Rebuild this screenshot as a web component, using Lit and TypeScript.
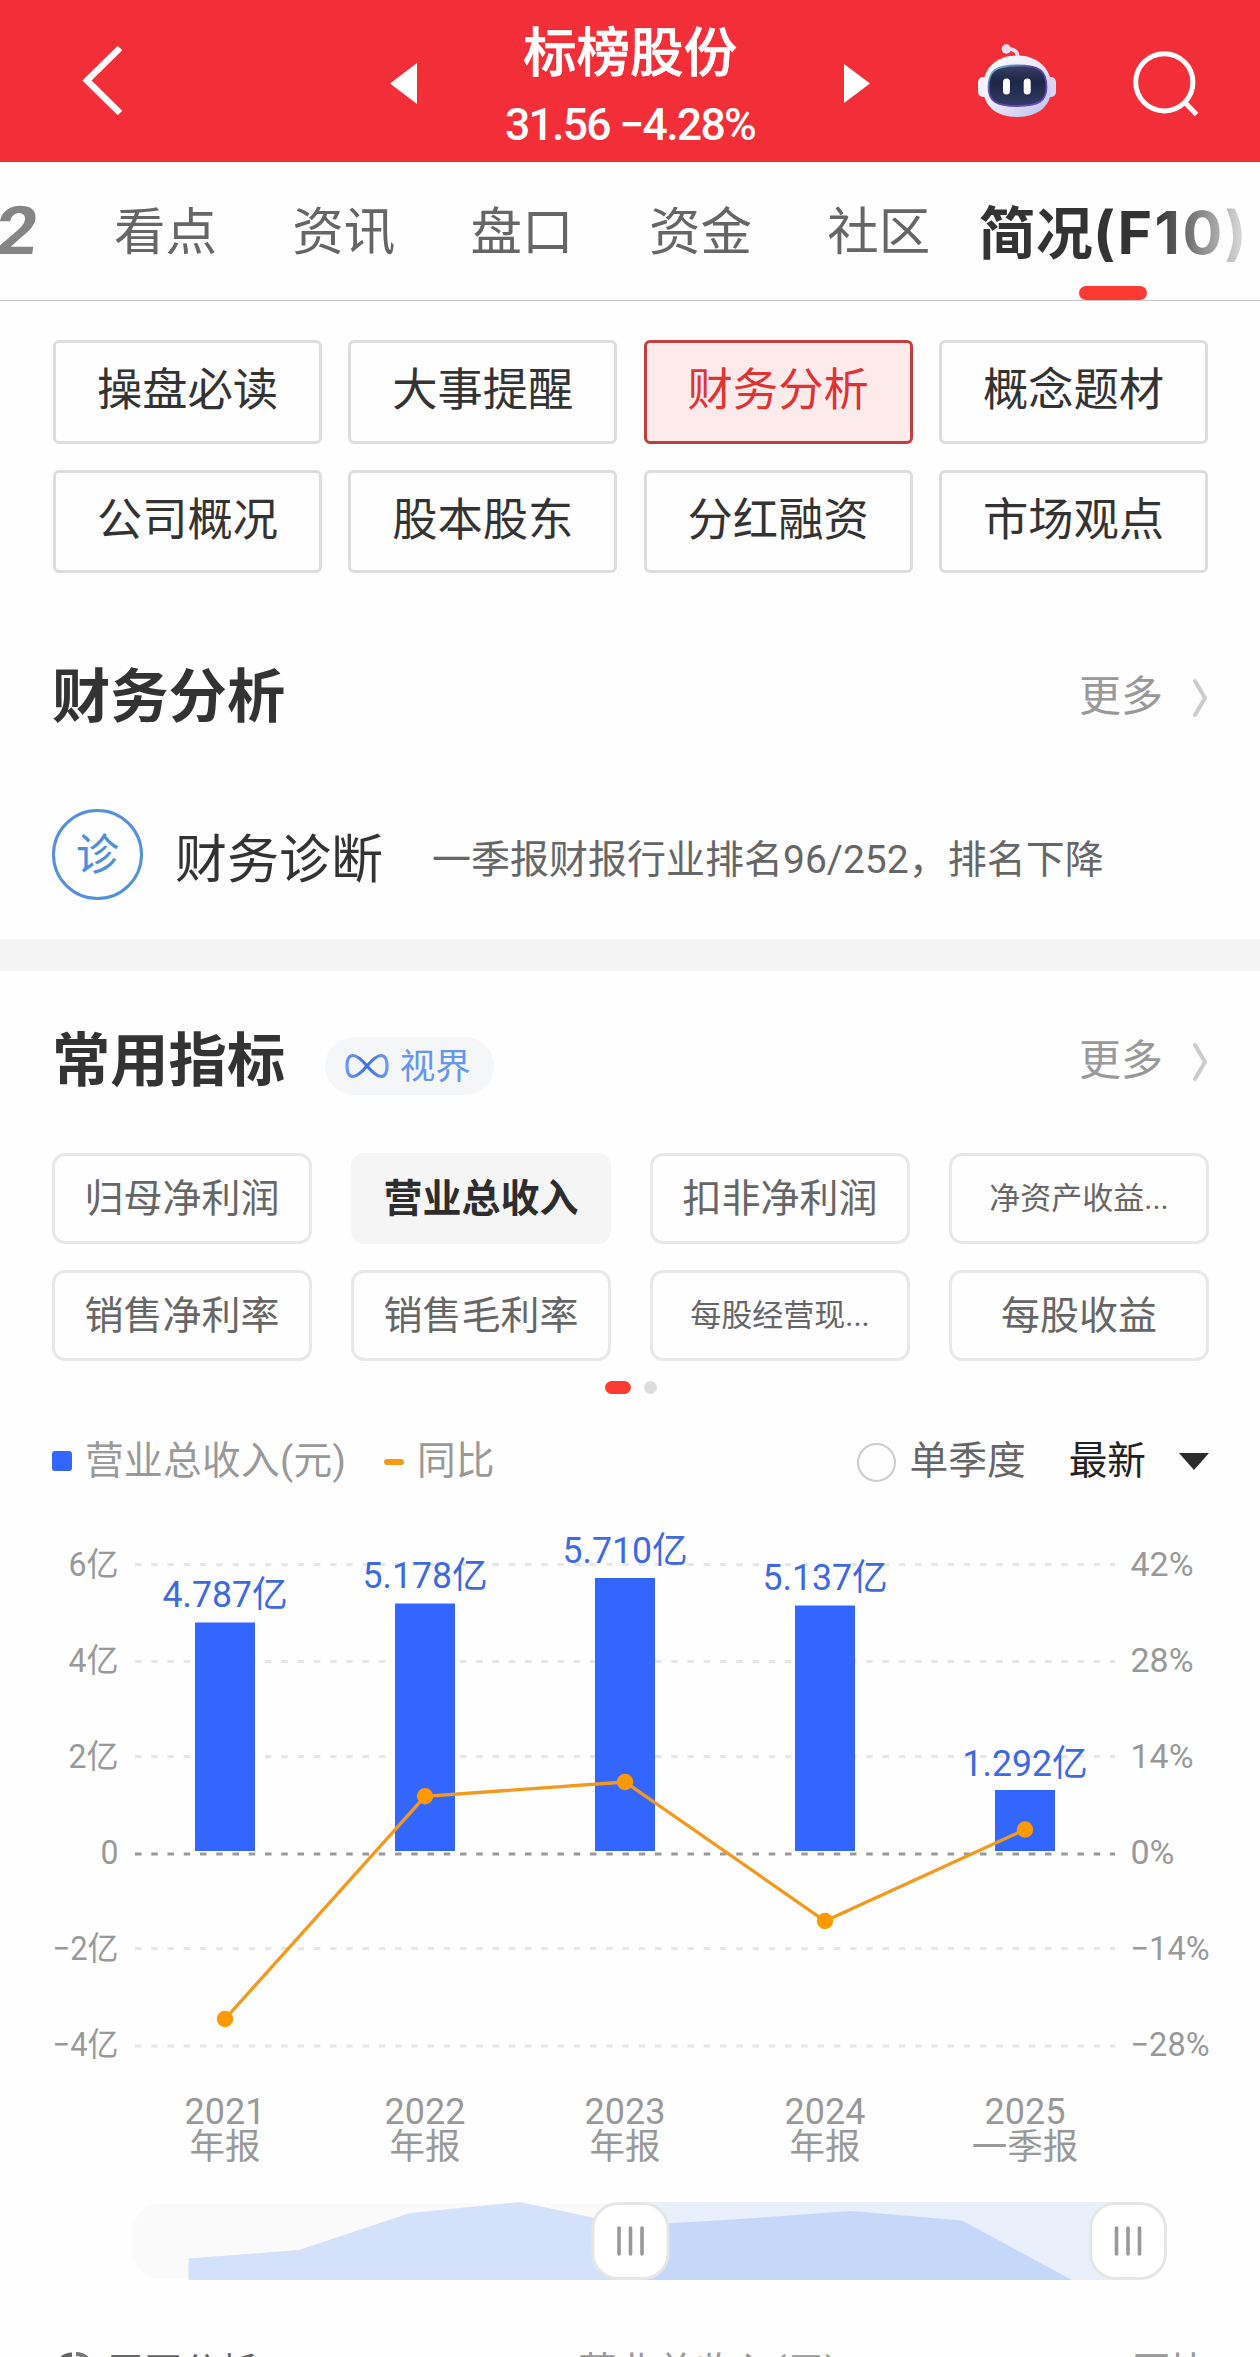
import { LitElement, html, svg, css } from "lit";
import { customElement } from "lit/decorators.js";
import { classMap } from "lit/directives/class-map.js";

const TABS = ["看点", "资讯", "盘口", "资金", "社区"];
const SECTIONS = ["操盘必读", "大事提醒", "财务分析", "概念题材", "公司概况", "股本股东", "分红融资", "市场观点"];
const METRICS = ["归母净利润", "营业总收入", "扣非净利润", "净资产收益...", "销售净利率", "销售毛利率", "每股经营现...", "每股收益"];

const AXIS = [
  { y: 1564.5, left: "6亿", right: "42%", lw: 50, rw: 63 },
  { y: 1661.5, left: "4亿", right: "28%", lw: 50, rw: 63 },
  { y: 1756.5, left: "2亿", right: "14%", lw: 50, rw: 63 },
  { y: 1854, left: "0", right: "0%", lw: 18, rw: 44 },
  { y: 1948.5, left: "−2亿", right: "−14%", lw: 66, rw: 79 },
  { y: 2046, left: "−4亿", right: "−28%", lw: 66, rw: 79 },
];
const LABEL_BASE = [1575.5, 1671.5, 1767.5, 1863.5, 1959.5, 2055.5];

const BARS = [
  { x: 225, top: 1622.5, value: "4.787亿", base: 1607, dot: 2019, year: "2021", term: "年报" },
  { x: 425, top: 1603.5, value: "5.178亿", base: 1588, dot: 1796.3, year: "2022", term: "年报" },
  { x: 625, top: 1578, value: "5.710亿", base: 1563, dot: 1782, year: "2023", term: "年报" },
  { x: 825, top: 1605.5, value: "5.137亿", base: 1590, dot: 1921, year: "2024", term: "年报" },
  { x: 1025, top: 1790, value: "1.292亿", base: 1775.5, dot: 1829.5, year: "2025", term: "一季报" },
];

@customElement("stock-header")
class StockHeader extends LitElement {
  static styles = css`
    :host { display: flex; height: 162px; background: #f22f38; color: #fff; }
    svg { display: block; flex: none; }
    .back { margin: 43px 0 0 80px; }
    .prev { margin: 63px 0 0 264px; }
    .title { margin-left: 63px; width: 300px; text-align: center; flex: none; }
    .name { font-size: 53.5px; line-height: 60px; font-weight: 500; margin-top: 24px; -webkit-text-stroke: .6px #fff; }
    .quote { font-size: 44.5px; line-height: 52px; font-weight: 500; margin-top: 15px; letter-spacing: -1.7px; white-space: nowrap; }
    .next { margin: 63px 0 0 64px; }
    .bot { margin: 42px 0 0 105px; }
    .search { margin: 48px 0 0 72px; }
  `;
  render() {
    return html`
      <svg class="back" width="46" height="76" viewBox="80 44 46 76">
        <path d="M120 49 L87 81.500 L120 114" fill="none" stroke="#fff" stroke-width="6.500" />
      </svg>
      <svg class="prev" width="27" height="41" viewBox="0 0 27 41"><path d="M27 0V41L0 20.500Z" fill="#fff" /></svg>
      <div class="title">
        <div class="name">标榜股份</div>
        <div class="quote">31.56 −4.28%</div>
      </div>
      <svg class="next" width="27" height="41" viewBox="0 0 27 41"><path d="M0 1V40L26 20.500Z" fill="#fff" /></svg>
      <svg class="bot" width="82" height="78" viewBox="976 42 82 78">
        <defs>
          <linearGradient id="shell" x1="0" y1="0" x2="1" y2="1">
            <stop offset="0" stop-color="#ffffff" /><stop offset=".45" stop-color="#eeeaf8" /><stop offset="1" stop-color="#b9bdf0" />
          </linearGradient>
          <linearGradient id="rim" x1="0" y1="0" x2="1" y2="1">
            <stop offset="0" stop-color="#67d6ea" /><stop offset=".4" stop-color="#5b3f9d" /><stop offset="1" stop-color="#6d45d8" />
          </linearGradient>
          <linearGradient id="glass" x1="0" y1="0" x2="0" y2="1">
            <stop offset="0" stop-color="#3a4064" /><stop offset=".4" stop-color="#1d2646" /><stop offset="1" stop-color="#323c63" />
          </linearGradient>
        </defs>
        <path d="M1007 49 Q1017 48 1018 57" fill="none" stroke="#eadff2" stroke-width="3.500" />
        <circle cx="1006.300" cy="49" r="4.700" fill="#e6dff4" />
        <rect x="978" y="77" width="12" height="20" rx="5" fill="#f4f0fb" />
        <rect x="1044" y="77" width="12" height="20" rx="5" fill="#d9d6f5" />
        <path d="M1017 55.500 C1038 55.500 1051.500 69 1051.500 87 C1051.500 106 1038 117 1017 117 C996 117 983 106 983 87 C983 69 996 55.500 1017 55.500Z" fill="url(#shell)" />
        <path d="M1017 65.500 C1040 65.500 1046.500 71 1046.500 87 C1046.500 101 1039 106 1017 106 C996 106 988.500 101 988.500 87 C988.500 71 995 65.500 1017 65.500Z" fill="url(#glass)" stroke="url(#rim)" stroke-width="1.800" />
        <rect x="1003" y="78.500" width="7" height="16" rx="3.500" fill="#fff" />
        <rect x="1023.700" y="78.500" width="7" height="16" rx="3.500" fill="#fff" />
      </svg>
      <svg class="search" width="70" height="72" viewBox="1130 48 70 72">
        <circle cx="1164.300" cy="82.300" r="28.600" fill="none" stroke="#fff" stroke-width="5" />
        <path d="M1184.500 102 L1196.500 114.500" stroke="#fff" stroke-width="5" />
      </svg>
    `;
  }
}

@customElement("tab-strip")
class TabStrip extends LitElement {
  static styles = css`
    :host { display: flex; position: relative; height: 138px; border-bottom: 1px solid #c6c6c6; overflow: hidden; color: #666; }
    .level { width: 114px; flex: none; font: 700 67px/138px Roboto, sans-serif; color: #858585; }
    .glyph { display: inline-block; transform: skewX(-8deg) scaleX(1.1); transform-origin: 0 50%; margin-left: -4px; }
    .tab { width: 178.300px; flex: none; font-size: 51.500px; line-height: 142px; }
    .current {
      margin-left: -27px; font-size: 57px; line-height: 141px; font-weight: 700; letter-spacing: .2px; white-space: nowrap;
      background: linear-gradient(90deg, #333 178px, #e8e8e8 272px); -webkit-background-clip: text; background-clip: text; color: transparent;
    }
    .code { font-family: Inter, Roboto, sans-serif; letter-spacing: 2.4px; font-size: 59px; }
    .mark { position: absolute; left: 1079px; bottom: 0; width: 68px; height: 14px; border-radius: 7px; background: #fb3b33; }
  `;
  render() {
    return html`
      <div class="level"><span class="glyph">2</span></div>
      ${TABS.map((t) => html`<div class="tab">${t}</div>`)}
      <div class="current">简况<span class="code">(F10)</span></div>
      <div class="mark"></div>
    `;
  }
}

@customElement("section-title")
class SectionTitle extends LitElement {
  static properties = { label: { type: String } };
  declare label: string;
  static styles = css`
    :host { display: flex; align-items: center; height: 80px; padding: 0 51px 0 52px; }
    .label { font-size: 58.300px; line-height: 80px; font-weight: 600; color: #333; }
    .more { margin-left: auto; font-size: 42px; line-height: 78px; color: #999; }
    svg { display: block; margin: 1px 0 0 28px; }
  `;
  render() {
    return html`
      <div class="label">${this.label}</div>
      <slot></slot>
      <div class="more">更多</div>
      <svg width="18" height="42" viewBox="0 0 18 42"><path d="M4 4 L14 21 L4 38" fill="none" stroke="#ccc" stroke-width="4" stroke-linecap="round" stroke-linejoin="round" /></svg>
    `;
  }
}

@customElement("revenue-chart")
class RevenueChart extends LitElement {
  static styles = css`
    :host { display: block; }
    svg { display: block; }
    text { font-family: Roboto, "Noto Sans CJK SC", sans-serif; }
    .axis { font-size: 32.500px; fill: #999; }
    .value { font-size: 36.500px; fill: #3d69e1; }
    .period { font-size: 35.500px; fill: #999; }
    .year { font-size: 36px; }
  `;
  render() {
    const line = BARS.map((b) => `${b.x},${b.dot}`).join(" ");
    return html`
      <svg width="1260" height="690" viewBox="0 1500 1260 690">
        ${AXIS.map((a, i) => svg`
          <line x1="135" x2="1115" y1=${a.y} y2=${a.y} stroke=${i === 3 ? "#999" : "#e6e6e6"} stroke-width="3" stroke-dasharray="6.500 9.750" />
          <text class="axis" x="118.500" y=${LABEL_BASE[i]} text-anchor="end" textLength=${a.lw} lengthAdjust="spacingAndGlyphs">${a.left}</text>
          <text class="axis" x="1130.500" y=${LABEL_BASE[i]} textLength=${a.rw} lengthAdjust="spacingAndGlyphs">${a.right}</text>`)}
        ${BARS.map((b) => svg`
          <rect x=${b.x - 30} y=${b.top} width="60" height=${1851 - b.top} fill="#3366ff" />
          <text class="value" x=${b.x} y=${b.base} text-anchor="middle" textLength="125" lengthAdjust="spacingAndGlyphs">${b.value}</text>
          <text class="period" text-anchor="middle"><tspan class="year" x=${b.x} y="2124">${b.year}</tspan><tspan x=${b.x} y="2159">${b.term}</tspan></text>`)}
        <polyline points=${line} fill="none" stroke="#f39a1e" stroke-width="3.300" />
        ${BARS.map((b) => svg`<circle cx=${b.x} cy=${b.dot} r="8.200" fill="#ff9900" />`)}
      </svg>
    `;
  }
}

@customElement("range-slider")
class RangeSlider extends LitElement {
  static styles = css`
    :host { display: block; }
    svg { display: block; }
  `;
  render() {
    const area = "188.500,2280 188.500,2258.500 299,2250 410,2213 520,2202 630,2225.500 741,2219 851,2211 962,2220.500 1072,2280";
    const handle = (x: number) => svg`
      <rect x=${x + 1.5} y="2203.500" width="75" height="75" rx="25" fill="#fff" stroke="#e6e6e6" stroke-width="3" />
      ${[27.5, 39, 50.5].map((d) => svg`<line x1=${x + d} x2=${x + d} y1="2228" y2="2254" stroke="#999" stroke-width="3.600" stroke-linecap="round" />`)}`;
    return html`
      <svg width="1260" height="110" viewBox="0 2190 1260 110">
        <defs><clipPath id="chosen"><rect x="630" y="2190" width="498" height="110" /></clipPath></defs>
        <rect x="133" y="2203.500" width="995" height="75" rx="27" fill="#fafafa" />
        <polygon points=${area} fill="#d4e1fa" />
        <rect x="630" y="2202" width="498" height="78" fill="#e9effb" />
        <polygon points=${area} fill="#c6d8fa" clip-path="url(#chosen)" />
        ${handle(591.5)}${handle(1089)}
      </svg>
    `;
  }
}

@customElement("app-root")
export class AppRoot extends LitElement {
  static styles = css`
    :host { display: flex; flex-direction: column; width: 1260px; height: 2357px; overflow: hidden; background: #fefefe; font-family: Roboto, "Noto Sans CJK SC", sans-serif; color: #333; }
    :host > * { flex: none; }
    .nav { display: grid; grid-template-columns: repeat(4, 269px); justify-content: space-between; row-gap: 26px; padding: 39px 52px 0 53px; }
    .nav-item { box-sizing: border-box; height: 103.500px; border: 3px solid #ddd; border-radius: 6px; text-align: center; font-size: 45.300px; line-height: 95px; color: #333; }
    .nav-item.on { background: #fdeaea; border-color: #c43e40; color: #dd3434; }
    .analysis { margin-top: 84px; }
    .diagnosis { display: flex; align-items: center; margin: 72px 0 39px 52px; height: 91px; }
    .badge { box-sizing: border-box; width: 91px; height: 91px; border: 3px solid #5490dc; border-radius: 50%; text-align: center; font-size: 43.500px; line-height: 88px; color: #4f8edb; }
    .diag-name { margin: 12px 0 0 32px; font-size: 52px; line-height: 80px; }
    .diag-text { margin: 11px 0 0 49px; font-size: 39px; line-height: 80px; color: #666; white-space: nowrap; }
    .band { height: 32px; background: #f4f4f4; }
    .common { margin-top: 50px; }
    .pill { display: flex; align-items: center; box-sizing: border-box; width: 169px; height: 58px; margin: 10px 0 0 40px; padding-left: 19px; border-radius: 29px; background: #f5f6f8; color: #6696ee; font-size: 35.500px; line-height: 61px; gap: 9.500px; }
    .pill svg { display: block; }
    .pill span { padding-top: 2px; }
    .metrics { display: grid; grid-template-columns: repeat(4, 260px); justify-content: space-between; row-gap: 26px; padding: 52px 51px 0 52px; }
    .metric { box-sizing: border-box; height: 91px; border: 3px solid #e8e8e8; border-radius: 13px; text-align: center; font-size: 39px; line-height: 86px; color: #666; }
    .metric.small { font-size: 31px; }
    .metric.on { background: #f5f5f5; border-color: #f5f5f5; color: #2d2d2d; font-weight: 600; }
    .pager { display: flex; justify-content: center; gap: 13px; margin: 20px 0 0 2px; height: 13px; }
    .pager-on { width: 26px; border-radius: 7px; background: #fb3b33; }
    .pager-off { width: 13px; border-radius: 7px; background: #ddd; }
    .legend { display: flex; align-items: center; height: 40px; margin: 47px 51px 19px 52px; font-size: 38.700px; line-height: 40px; color: #999; white-space: nowrap; }
    .square { width: 20px; height: 20px; border-radius: 3px; background: #3366ff; margin-right: 13px; }
    .revenue { width: 260px; letter-spacing: .3px; }
    .dash { width: 20px; height: 6px; border-radius: 3px; background: #f5991a; margin: 2px 13px 0 39px; }
    .radio { box-sizing: border-box; width: 39px; height: 39px; border: 2px solid #ccc; border-radius: 50%; margin: 2px 14px 0 auto; }
    .quarter { color: #666; }
    .latest { color: #222; margin: 0 33px 0 43px; }
    .foot { display: flex; height: 40px; margin-top: 52px; padding: 0 64px 0 56px; font-size: 39px; line-height: 40px; color: #999; }
    .foot svg { display: block; margin-right: 14px; }
    .expand { color: #666; font-size: 38px; width: 472px; }
    .foot-yoy { margin-left: auto; width: 64px; white-space: nowrap; }
  `;
  render() {
    return html`
      <stock-header></stock-header>
      <tab-strip></tab-strip>
      <div class="nav">
        ${SECTIONS.map((s, i) => html`<div class=${classMap({ "nav-item": true, on: i === 2 })}>${s}</div>`)}
      </div>
      <section-title class="analysis" label="财务分析"></section-title>
      <div class="diagnosis">
        <div class="badge">诊</div>
        <div class="diag-name">财务诊断</div>
        <div class="diag-text">一季报财报行业排名96/252，排名下降</div>
      </div>
      <div class="band"></div>
      <section-title class="common" label="常用指标">
        <div class="pill">
          <svg width="46" height="26" viewBox="0 0 46 26">
            <defs><linearGradient id="loop"><stop offset="0" stop-color="#6a9bf2" /><stop offset=".5" stop-color="#3f6fdc" /><stop offset="1" stop-color="#6a9bf2" /></linearGradient></defs>
            <path d="M23 13 C17 6 13 2.500 9 2.500 C5 2.500 3 7 3 13 C3 19 5 23.500 9 23.500 C13 23.500 17 20 23 13 C29 6 33 2.500 37 2.500 C41 2.500 43 7 43 13 C43 19 41 23.500 37 23.500 C33 23.500 29 20 23 13Z" fill="none" stroke="url(#loop)" stroke-width="3.200" />
          </svg>
          <span>视界</span>
        </div>
      </section-title>
      <div class="metrics">
        ${METRICS.map((m, i) => html`<div class=${classMap({ metric: true, on: i === 1, small: m.endsWith("...") })}>${m}</div>`)}
      </div>
      <div class="pager"><div class="pager-on"></div><div class="pager-off"></div></div>
      <div class="legend">
        <div class="square"></div><div class="revenue">营业总收入(元)</div>
        <div class="dash"></div><div>同比</div>
        <div class="radio"></div><div class="quarter">单季度</div>
        <div class="latest">最新</div>
        <svg width="30" height="17" viewBox="0 0 30 17"><path d="M0 0H30L15 17Z" fill="#2b2b2b" /></svg>
      </div>
      <revenue-chart></revenue-chart>
      <range-slider></range-slider>
      <div class="foot">
        <svg width="36" height="36" viewBox="0 0 36 36"><path d="M16 0.500A17.500 17.500 0 0 0 16 35.500Z" fill="#666" /><path d="M20 2A16 16 0 0 1 20 34" fill="none" stroke="#777" stroke-width="4" /></svg>
        <div class="expand">展开分析</div>
        <div>营业总收入(元)</div>
        <div class="foot-yoy">同比</div>
      </div>
    `;
  }
}
